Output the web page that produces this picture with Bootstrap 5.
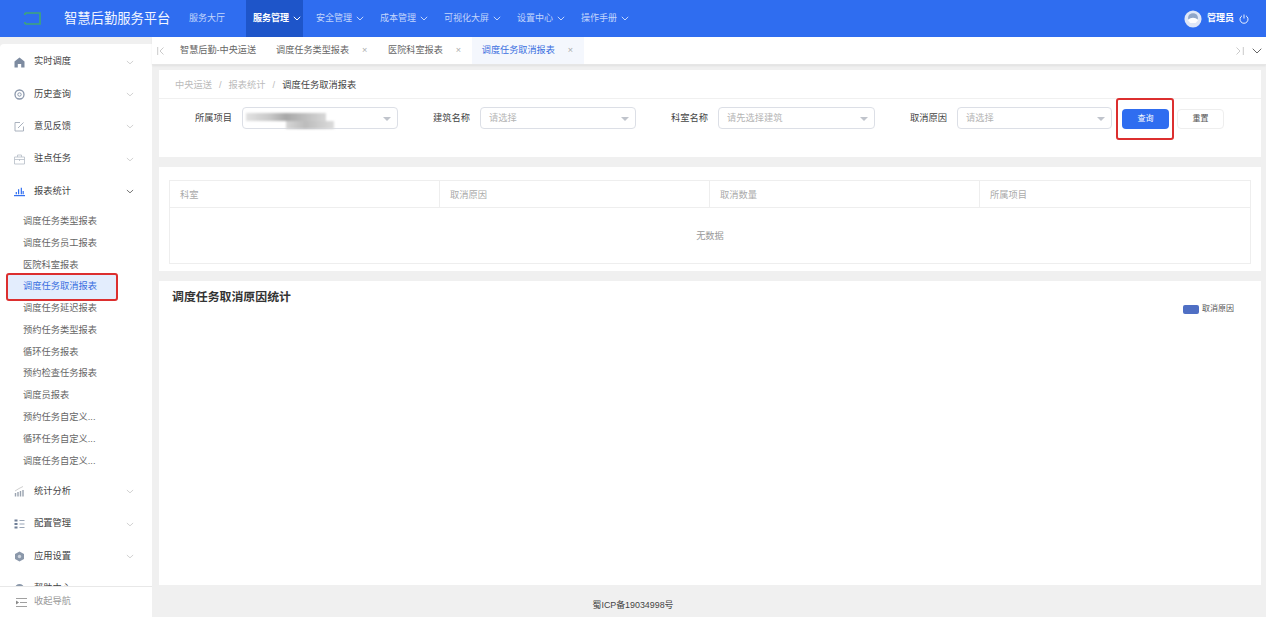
<!DOCTYPE html>
<html lang="zh"><head><meta charset="utf-8"><title>调度任务取消报表</title>
<link href="https://cdn.jsdelivr.net/npm/bootstrap@5.3.0/dist/css/bootstrap.min.css" rel="stylesheet">
<style>
html,body{height:617px;overflow:hidden}
body{font-family:"Liberation Sans","Noto Sans CJK SC",sans-serif;background:#f0f0f0;color:#333;font-size:9.25px}
.topbar{height:37px;background:#2f6df0;color:#fff;flex:none}
.logo-wrap{width:64px;padding-left:24px}
.brand-t{font-size:13.3px;width:117px;white-space:nowrap;color:#f2f6ff}
.tnav{height:37px;padding:0 8px;font-size:9px;color:#c3d6fc;white-space:nowrap;gap:4px}
.tnav.on{background:#1e55c9;color:#fff;font-weight:700;padding:0 2px 0 7px;margin-right:5px}
.tnav-first{margin-right:13px}
.user{font-size:9px;padding-right:17px;gap:5px;font-weight:700}
.side{width:152px;flex:none;background:#fff;margin-top:7px;border-top-left-radius:4px}
.side-scroll{height:542px;flex:none;overflow:hidden;padding-top:2px}
.mi{height:32.4px;padding:0 18px 0 14px;color:#444;gap:9px}
.mi svg{flex:none}
.mi .lab{flex:1}
.subs{padding:3px 0 3px}
.si{height:21.8px;padding-left:23px;color:#666;white-space:nowrap}
.si.on{color:#3a6fe0;margin-left:6px;padding-left:17px;width:112px;position:relative;z-index:0}
.si.on::after{content:"";position:absolute;inset:-3px 0;background:#e3edfd;border:2.5px solid #dc2f2f;border-radius:3px;z-index:-1}
.side-foot{height:31px;flex:none;border-top:1px solid #e8e8e8;color:#999;padding-left:16px;gap:7px}
.tabs{height:28px;background:#fff;flex:none;border-bottom:1px solid #e6e6e6;font-size:9.15px;color:#666;box-shadow:0 1px 2px #0001}
.tb-arrow{width:18px;padding-left:5px}
.tb{height:27px;padding:1px 10px 0;white-space:nowrap;gap:12px}
.tb.on{background:#f4f7fd;color:#3a6fe0}
.tb i{font-style:normal;color:#aaa;width:7px;text-align:center}
.pnl{background:#fff;margin:0 5px 0 7px}
.crumb{height:29px;padding:4px 0 0 16px;border-bottom:1px solid #f0f0f0;color:#bbb;gap:7px}
.crumb b{font-weight:400;color:#444}
.filters{height:58px;padding-top:8px;position:relative}
.fl{color:#444;text-align:right;white-space:nowrap;line-height:23px;width:37px}
.fl-first{width:73px}
.sel{height:22px;border:1px solid #dcdfe6;border-radius:4px;color:#b5b5b5;padding:1px 6px 0 8px;background:#fff}
.sel::after{content:"";border:4px solid transparent;border-top:4px solid #c0c4cc;border-bottom:0;margin-left:auto}
.s1{width:156px;margin:0 35px 0 10px;padding-left:3px}
.s2{width:156px;margin:0 35px 0 10px}
.s3{width:157px;margin:0 35px 0 10px}
.s4{width:155px;margin:0 0 0 10px}
.fake{width:88px;height:16px;position:relative;top:2px;filter:blur(1.2px)}
.fake::before{content:"";position:absolute;left:0;top:0;width:80px;height:8px;background:linear-gradient(90deg,#e2e2e2,#c8c8c8 30%,#a8a8a8 50%,#d8d8d8)}
.fake::after{content:"";position:absolute;right:0;bottom:0;width:48px;height:8px;background:linear-gradient(90deg,#d6d6d6,#bcbcbc 40%,#dcdcdc)}
.bq{width:47px;height:20px;background:#2f6df0;color:#fff;font-size:8px;border-radius:4px;margin:2px 0 0 10px;border:0;padding:0}
.bqring{outline:2px solid #dc2f2f;border-radius:1px;position:absolute;left:959px;top:1px;width:54px;height:38px;pointer-events:none}
.br{width:47px;height:20px;background:#fff;color:#555;font-size:8px;border:1px solid #eee;border-radius:4px;margin:2px 0 0 8px;padding:0}
.tcard{height:104px;margin-top:10px;padding:13px 10px 7px 10px}
.tbl{border:1px solid #eee;height:84px;color:#aaa}
.thd{height:27px;border-bottom:1px solid #eee}
.thd>div{padding-left:10px;border-right:1px solid #eee;line-height:28px}
.c1{width:270px}.c2{width:270px}.c3{width:270px}
.thd .c4{flex:1;border:0}
.nodata{height:56px;color:#999;padding-top:2px}
.chart{height:304px;margin-top:10px;padding:9px 27px 0 13px;position:relative}
.chart h2{font-size:11.9px;font-weight:700;color:#333;margin:0}
.leg{font-size:8px;color:#555;gap:3px;margin-top:13px}
.leg span{width:16px;height:9px;background:#4f6fc4;border-radius:2px;display:block}
.foot{height:32px;font-size:8.9px;color:#444;padding:14px 152px 0 0}
</style></head>
<body class="d-flex flex-column">
<header class="topbar d-flex align-items-center">
 <div class="logo-wrap"><svg width="17" height="13" viewBox="0 0 17 13" class="d-block"><path d="M1 1H16V12H1M1 1V3M1 10V12" fill="none" stroke="#3fa57a" stroke-width="1.7"/></svg></div>
 <div class="brand-t">智慧后勤服务平台</div>
 <div class="tnav tnav-first d-flex align-items-center">服务大厅</div>
 <div class="tnav on d-flex align-items-center">服务管理<svg width="8" height="5" viewBox="0 0 8 5"><path d="M.8.8 4 4 7.2.8" fill="none" stroke="currentColor"/></svg></div>
 <div class="tnav d-flex align-items-center">安全管理<svg width="8" height="5" viewBox="0 0 8 5"><path d="M.8.8 4 4 7.2.8" fill="none" stroke="currentColor"/></svg></div>
 <div class="tnav d-flex align-items-center">成本管理<svg width="8" height="5" viewBox="0 0 8 5"><path d="M.8.8 4 4 7.2.8" fill="none" stroke="currentColor"/></svg></div>
 <div class="tnav d-flex align-items-center">可视化大屏<svg width="8" height="5" viewBox="0 0 8 5"><path d="M.8.8 4 4 7.2.8" fill="none" stroke="currentColor"/></svg></div>
 <div class="tnav d-flex align-items-center">设置中心<svg width="8" height="5" viewBox="0 0 8 5"><path d="M.8.8 4 4 7.2.8" fill="none" stroke="currentColor"/></svg></div>
 <div class="tnav d-flex align-items-center">操作手册<svg width="8" height="5" viewBox="0 0 8 5"><path d="M.8.8 4 4 7.2.8" fill="none" stroke="currentColor"/></svg></div>
 <div class="user ms-auto d-flex align-items-center">
  <svg width="18" height="18" viewBox="0 0 20 20"><circle cx="10" cy="10" r="9.5" fill="#dfe7f7"/><circle cx="10" cy="9" r="5.5" fill="#8fa6c9"/><path d="M4 11q6-5 12 0l-3 3.5H7z" fill="#fff"/></svg>
  <span>管理员</span>
  <svg width="10" height="10" viewBox="0 0 10 10"><path d="M3 1.8a4 4 0 1 0 4 0M5 .5v4" fill="none" stroke="#fff" stroke-width=".9"/></svg>
 </div>
</header>
<div class="d-flex flex-grow-1" style="min-height:0">
 <aside class="side d-flex flex-column">
  <div class="side-scroll">
   <div class="mi d-flex align-items-center"><svg width="11" height="11" viewBox="0 0 11 11"><path d="M5.5.5 10.5 4.5V10.5H7.2V7H3.8V10.5H.5V4.5Z" fill="#7d8ba0"/></svg><span class="lab">实时调度</span><svg width="8" height="5" viewBox="0 0 9 5"><path d="M1 .8 4.5 4 8 .8" fill="none" stroke="#ccc"/></svg></div>
   <div class="mi d-flex align-items-center"><svg width="11" height="11" viewBox="0 0 11 11"><circle cx="5.5" cy="5.5" r="4.5" fill="none" stroke="#8a97ab" stroke-width="1.3"/><circle cx="5.5" cy="5.5" r="1.7" fill="none" stroke="#8a97ab"/></svg><span class="lab">历史查询</span><svg width="8" height="5" viewBox="0 0 9 5"><path d="M1 .8 4.5 4 8 .8" fill="none" stroke="#ccc"/></svg></div>
   <div class="mi d-flex align-items-center"><svg width="11" height="11" viewBox="0 0 11 11"><path d="M9.5 5.5V10H1V1.5H6M4 7 9.5 1.5" fill="none" stroke="#aab2be"/></svg><span class="lab">意见反馈</span><svg width="8" height="5" viewBox="0 0 9 5"><path d="M1 .8 4.5 4 8 .8" fill="none" stroke="#ccc"/></svg></div>
   <div class="mi d-flex align-items-center"><svg width="11" height="11" viewBox="0 0 11 11"><path d="M.5 3H10.5V10H.5ZM3.5 3V1H7.5V3M.5 5.5H10.5M5.5 5V7" fill="none" stroke="#b5bcc6" stroke-width=".8"/></svg><span class="lab">驻点任务</span><svg width="8" height="5" viewBox="0 0 9 5"><path d="M1 .8 4.5 4 8 .8" fill="none" stroke="#ccc"/></svg></div>
   <div class="mi d-flex align-items-center"><svg width="11" height="11" viewBox="0 0 12 11"><path d="M0 10H12" stroke="#2f6df0" stroke-width="1.3"/><path d="M2.5 8.5V6M5 8.5V3M8 8.5V1.5M10 8.5V5" stroke="#2f6df0" stroke-width="1.3"/></svg><span class="lab">报表统计</span><svg width="8" height="5" viewBox="0 0 9 5"><path d="M1 .8 4.5 4 8 .8" fill="none" stroke="#666"/></svg></div>
   <div class="subs">
    <div class="si d-flex align-items-center">调度任务类型报表</div>
    <div class="si d-flex align-items-center">调度任务员工报表</div>
    <div class="si d-flex align-items-center">医院科室报表</div>
    <div class="si on d-flex align-items-center">调度任务取消报表</div>
    <div class="si d-flex align-items-center">调度任务延迟报表</div>
    <div class="si d-flex align-items-center">预约任务类型报表</div>
    <div class="si d-flex align-items-center">循环任务报表</div>
    <div class="si d-flex align-items-center">预约检查任务报表</div>
    <div class="si d-flex align-items-center">调度员报表</div>
    <div class="si d-flex align-items-center">预约任务自定义...</div>
    <div class="si d-flex align-items-center">循环任务自定义...</div>
    <div class="si d-flex align-items-center">调度任务自定义...</div>
   </div>
   <div class="mi d-flex align-items-center"><svg width="11" height="11" viewBox="0 0 11 11"><path d="M1.5 10.5V7M4 10.5V6M6.5 10.5V5M9 10.5V4" stroke="#9aa3b0" stroke-width="1.4"/><path d="M1 5 5 2.5 9 .5" fill="none" stroke="#bbb" stroke-width=".7"/></svg><span class="lab">统计分析</span><svg width="8" height="5" viewBox="0 0 9 5"><path d="M1 .8 4.5 4 8 .8" fill="none" stroke="#ccc"/></svg></div>
   <div class="mi d-flex align-items-center"><svg width="11" height="11" viewBox="0 0 11 11"><path d="M.5 1.5H3.5M.5 5H3.5M.5 8.5H3.5" stroke="#6f7f97" stroke-width="1.8"/><path d="M5.5 1.5H10.5M5.5 5H10.5M5.5 8.5H10.5" stroke="#9aa6b7" stroke-width="1.2"/></svg><span class="lab">配置管理</span><svg width="8" height="5" viewBox="0 0 9 5"><path d="M1 .8 4.5 4 8 .8" fill="none" stroke="#ccc"/></svg></div>
   <div class="mi d-flex align-items-center"><svg width="11" height="11" viewBox="0 0 11 11"><path d="M5.5.5 10 3V8L5.5 10.5 1 8V3Z" fill="#8b98aa"/><circle cx="5.5" cy="5.5" r="1.7" fill="#cfd5de"/></svg><span class="lab">应用设置</span><svg width="8" height="5" viewBox="0 0 9 5"><path d="M1 .8 4.5 4 8 .8" fill="none" stroke="#ccc"/></svg></div>
   <div class="mi d-flex align-items-center"><svg width="11" height="11" viewBox="0 0 11 11"><circle cx="5.5" cy="5.5" r="4.5" fill="#8b98aa"/></svg><span class="lab">帮助中心</span></div>
  </div>
  <div class="side-foot d-flex align-items-center"><svg width="11" height="9" viewBox="0 0 11 9"><path d="M0 .5H11M4 4.5H11M0 8.5H11M0 3 2.5 4.5 0 6Z" fill="#888" stroke="#888" stroke-width=".8"/></svg><span>收起导航</span></div>
 </aside>
 <main class="flex-grow-1 d-flex flex-column" style="min-width:0">
  <div class="tabs d-flex align-items-center">
   <div class="tb-arrow d-flex align-items-center"><svg width="7" height="8" viewBox="0 0 7 8"><path d="M.7 0V8M6.5.5 3 4l3.5 3.500" fill="none" stroke="#c4c4c4" stroke-width=".9"/></svg></div>
   <div class="tb d-flex align-items-center">智慧后勤-中央运送</div>
   <div class="tb d-flex align-items-center">调度任务类型报表<i>×</i></div>
   <div class="tb d-flex align-items-center">医院科室报表<i>×</i></div>
   <div class="tb on d-flex align-items-center">调度任务取消报表<i>×</i></div>
   <svg class="ms-auto" width="8" height="8" viewBox="0 0 8 8"><path d="M7.3 0V8M.5.5 4 4 .5 7.5" fill="none" stroke="#c4c4c4" stroke-width=".9"/></svg>
   <svg class="ms-2 me-1" width="10" height="6" viewBox="0 0 10 6"><path d="M.7.7 5 5 9.3.7" fill="none" stroke="#666"/></svg>
  </div>
  <section class="pnl" style="margin-top:5px">
   <div class="crumb d-flex align-items-center"><span>中央运送</span><span>/</span><span>报表统计</span><span>/</span><b>调度任务取消报表</b></div>
   <div class="filters d-flex align-items-start">
    <div class="fl fl-first">所属项目</div>
    <div class="sel s1 d-flex align-items-center"><div class="fake"></div></div>
    <div class="fl">建筑名称</div>
    <div class="sel s2 d-flex align-items-center">请选择</div>
    <div class="fl">科室名称</div>
    <div class="sel s3 d-flex align-items-center">请先选择建筑</div>
    <div class="fl">取消原因</div>
    <div class="sel s4 d-flex align-items-center">请选择</div>
    <button type="button" class="btn bq">查询</button>
    <button type="button" class="btn br">重置</button>
    <div class="bqring"></div>
   </div>
  </section>
  <section class="pnl tcard">
   <div class="tbl">
    <div class="thd d-flex"><div class="c1">科室</div><div class="c2">取消原因</div><div class="c3">取消数量</div><div class="c4">所属项目</div></div>
    <div class="nodata d-flex align-items-center justify-content-center">无数据</div>
   </div>
  </section>
  <section class="pnl chart">
   <div class="d-flex justify-content-between align-items-start"><h2>调度任务取消原因统计</h2><div class="leg d-flex align-items-center"><span></span>取消原因</div></div>
  </section>
  <footer class="foot text-center">蜀ICP备19034998号</footer>
 </main>
</div>
<script src="https://cdn.jsdelivr.net/npm/bootstrap@5.3.0/dist/js/bootstrap.bundle.min.js"></script>
</body></html>
